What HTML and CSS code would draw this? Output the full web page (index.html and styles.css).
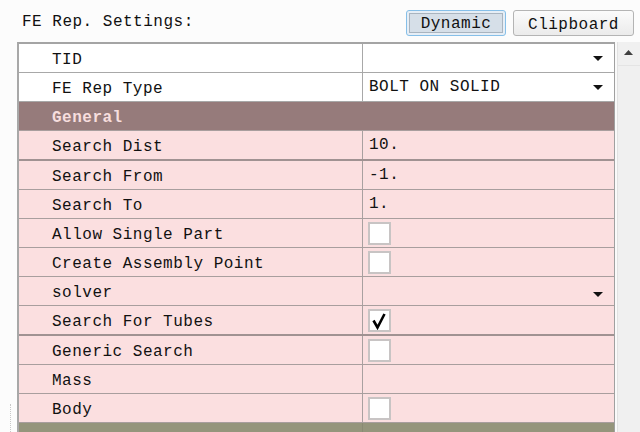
FILE: index.html
```html
<!DOCTYPE html>
<html>
<head>
<meta charset="utf-8">
<link rel="stylesheet" href="styles.css">
</head>
<body>
<div class="page">
  <div class="toolbar">
    <span class="title">FE Rep. Settings:</span>
    <div class="buttons">
      <button class="btn btn-active"><span class="btn-in">Dynamic</span></button>
      <button class="btn">Clipboard</button>
    </div>
  </div>
  <div class="panel">
    <div class="grid">
      <div class="row white"><div class="k">TID</div><div class="v"><span></span><i class="arrow"></i></div></div>
      <div class="row white"><div class="k">FE Rep Type</div><div class="v"><span>BOLT ON SOLID</span><i class="arrow"></i></div></div>
      <div class="row group"><div class="k">General</div><div class="v"></div></div>
      <div class="row pink thick"><div class="k">Search Dist</div><div class="v"><span>10.</span></div></div>
      <div class="row pink"><div class="k">Search From</div><div class="v"><span>-1.</span></div></div>
      <div class="row pink"><div class="k">Search To</div><div class="v"><span>1.</span></div></div>
      <div class="row pink"><div class="k">Allow Single Part</div><div class="v"><b class="cb"></b></div></div>
      <div class="row pink"><div class="k">Create Assembly Point</div><div class="v"><b class="cb"></b></div></div>
      <div class="row pink"><div class="k">solver</div><div class="v"><span></span><i class="arrow low"></i></div></div>
      <div class="row pink thick"><div class="k">Search For Tubes</div><div class="v"><b class="cb"><svg width="19" height="19" viewBox="0 0 19 19"><path d="M3.5 9.5 L7.5 16.5 L14.5 3" fill="none" stroke="#000" stroke-width="2.6" stroke-linejoin="miter"/></svg></b></div></div>
      <div class="row pink"><div class="k">Generic Search</div><div class="v"><b class="cb"></b></div></div>
      <div class="row pink"><div class="k">Mass</div><div class="v"></div></div>
      <div class="row pink"><div class="k">Body</div><div class="v"><b class="cb"></b></div></div>
      <div class="row olive"><div class="k"></div><div class="v"></div></div>
    </div>
    <div class="scrollbar">
      <div class="sb-up"><svg width="9" height="5" viewBox="0 0 9 5"><path d="M0 5 L4.5 0 L9 5 Z" fill="#404040"/></svg></div>
    </div>
    <div class="dots"></div>
  </div>
</div>
</body>
</html>
```

FILE: styles.css
```css
* { box-sizing: border-box; }
html, body { margin: 0; padding: 0; }
body {
  background: #fcfcfc;
  font-family: "Liberation Mono", "DejaVu Sans Mono", monospace;
  font-size: 16px;
  letter-spacing: 0.5px;
  color: #111;
  width: 640px;
  height: 432px;
  overflow: hidden;
}
.page { display: flex; flex-direction: column; height: 432px; }
.toolbar {
  height: 42px;
  display: flex;
  align-items: flex-start;
  padding-left: 22px;
}
.title { margin-top: 12px; line-height: 20px; }
.buttons { margin-left: auto; margin-top: 10px; margin-right: 6px; display: flex; gap: 7px; }
.btn {
  font-family: inherit;
  font-size: 16px;
  letter-spacing: 0.5px;
  height: 26px;
  padding: 0;
  color: #111;
  border-radius: 3px;
  line-height: 24px;
}
.btn-active {
  width: 100px;
  border: 1px solid #86bfe8;
  background: #e6eef6;
  padding: 2px;
}
.btn-in {
  display: block;
  height: 100%;
  border: 1px solid #a9b4bf;
  background: #d6dfe8;
  line-height: 21px;
}
.btn:not(.btn-active) {
  width: 121px;
  border: 1px solid #b4b4b4;
  background: linear-gradient(#fbfbfb, #ebebeb);
  padding-top: 2px;
}
.panel { position: relative; display: flex; flex: 1; margin-left: 17px; }
.grid {
  width: 598px;
  border-left: 2px solid #a8a8a8;
  border-top: 2px solid #a4a4a4;
  border-right: 1px solid #a0a0a0;
  display: flex;
  flex-direction: column;
}
.row { display: flex; height: 29px; border-bottom: 1px solid #a89e9e; flex: none; }
.row.thick { height: 30px; border-bottom: 2px solid #a09292; }
.k {
  width: 344px;
  padding-left: 33px;
  line-height: 32px;
  border-right: 1px solid #a8a0a0;
  white-space: nowrap;
}
.v {
  flex: 1;
  display: flex;
  align-items: center;
  padding-left: 6px;
  padding-right: 11px;
  line-height: 32px;
}
.v span { flex: 1; }
.white { background: #ffffff; border-bottom-color: #a8a8a8; }
.white .k { border-right-color: #a8a8a8; }
.pink { background: #fbdfe0; }
.group { background: #967b7b; border-bottom-color: #a89e9e; }
.group .k { color: #f7dede; font-weight: bold; border-right-color: #967b7b; }
.olive { background: #95957c; flex: 1; border-bottom: none; }
.olive .k { border-right-color: #8a8a74; }
.arrow {
  width: 0; height: 0;
  border-left: 5px solid transparent;
  border-right: 5px solid transparent;
  border-top: 5px solid #111;
  margin-left: auto;
  margin-top: 1px;
}
.arrow.low { margin-top: 7px; }
.cb {
  width: 23px;
  height: 23px;
  background: #fff;
  border: 2px solid #c8c4c4;
  display: flex;
  align-items: center;
  justify-content: center;
  margin-left: -1px;
  margin-top: 1px;
}
.scrollbar {
  width: 25px;
  margin-left: 0;
  background: #f0f0f0;
  border-left: 2px solid #fafafa;
  box-shadow: inset 1px 0 0 #e2e2e2;
}
.sb-up {
  height: 24px;
  display: flex;
  justify-content: center;
  padding-top: 8px;
  border-bottom: 1px solid #e4e4e4;
}
.sb-up svg { display: block; }
.dots {
  position: absolute;
  left: -7px;
  top: 362px;
  height: 30px;
  border-left: 1px dotted #c8c8c8;
}
```
